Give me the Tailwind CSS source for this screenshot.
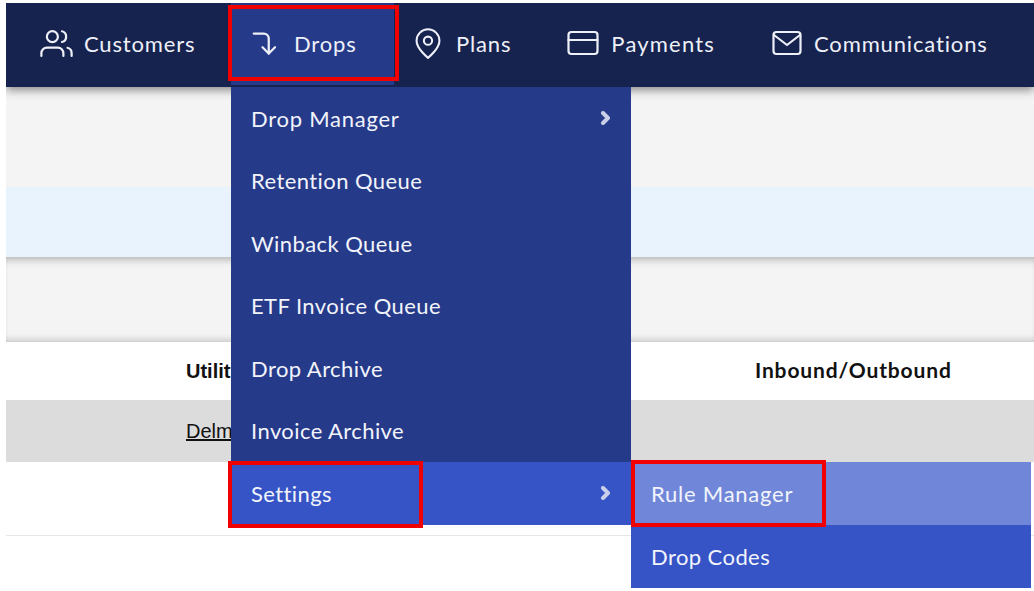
<!DOCTYPE html>
<html lang="en">
<head>
  <meta charset="UTF-8" />
  <title>Drops menu</title>
  <script src="https://cdn.jsdelivr.net/npm/@tailwindcss/browser@4"></script>
</head>
<body class="relative h-[591px] w-[1034px] overflow-hidden bg-white [font-family:Lato,sans-serif]">
  <div class="ml-[6px] mt-[3px] overflow-hidden">
    <!-- top nav -->
    <nav class="relative z-10 flex h-[84px] items-center bg-[#16234f] pb-[4px] text-[22px] tracking-[0.85px] text-[#eef0f8] shadow-[0_3px_9px_rgba(0,0,0,0.45)]">
      <a class="flex h-[84px] w-[225px] items-center pl-[34px]">
        <svg class="mr-[11px] h-[33px] w-[33px]" viewBox="0 0 24 24" fill="none" stroke="currentColor" stroke-width="1.6" stroke-linecap="round" stroke-linejoin="round"><path d="M17 21v-2a4 4 0 0 0-4-4H5a4 4 0 0 0-4 4v2"/><circle cx="9" cy="7" r="4"/><path d="M23 21v-2a4 4 0 0 0-3-3.87"/><path d="M16 3.13a4 4 0 0 1 0 7.75"/></svg>
        <span>Customers</span>
      </a>
      <a class="flex h-[84px] w-[163px] items-center bg-[#263a8a] pl-[19px]">
        <svg class="mr-[14px] h-[33px] w-[30px]" viewBox="0 0 24 24" fill="none" stroke="currentColor" stroke-width="1.8" stroke-linecap="round" stroke-linejoin="round"><path d="M10 15l5 5 5-5"/><path d="M3 4h8a4 4 0 0 1 4 4v12"/></svg>
        <span>Drops</span>
      </a>
      <a class="flex h-[84px] items-center pl-[20px]">
        <svg class="mr-[14px] h-[32px] w-[28px]" viewBox="0 0 24 28" fill="none" stroke="currentColor" stroke-width="1.8" stroke-linecap="round" stroke-linejoin="round"><path d="M22 12c0 7-10 15-10 15S2 19 2 12a10 10 0 0 1 20 0z"/><circle cx="12" cy="12" r="3.6"/></svg>
        <span>Plans</span>
      </a>
      <a class="ml-[56px] flex h-[84px] items-center">
        <svg class="mr-[12px] h-[26px] w-[32px]" viewBox="0 0 32 26" fill="none" stroke="currentColor" stroke-width="2.2" stroke-linecap="round" stroke-linejoin="round"><rect x="1.5" y="2" width="29" height="22" rx="3"/><path d="M1.5 10h29"/></svg>
        <span class="tracking-[1.2px]">Payments</span>
      </a>
      <a class="ml-[57px] flex h-[84px] items-center">
        <svg class="mr-[12px] h-[26px] w-[30px]" viewBox="0 0 30 26" fill="none" stroke="currentColor" stroke-width="2.2" stroke-linecap="round" stroke-linejoin="round"><rect x="1.5" y="2" width="27" height="22" rx="3"/><path d="M2 5l13 10L28 5"/></svg>
        <span>Communications</span>
      </a>
    </nav>

    <!-- page bands -->
    <div class="h-[100px] bg-[#f4f4f4]"></div>
    <div class="h-[70px] bg-[#e8f3fe]"></div>
    <div class="h-[85px] bg-[#f4f4f4] shadow-[inset_0_8px_8px_-6px_rgba(0,0,0,0.3),inset_0_-7px_7px_-5px_rgba(0,0,0,0.2)]"></div>

    <!-- table -->
    <div class="grid h-[58px] grid-cols-[180px_569px_1fr] items-center bg-white text-[20px] font-bold text-[#111]">
      <div class="col-start-2 [font-family:'Liberation_Sans',sans-serif]">Utility</div>
      <div class="col-start-3 pb-[2px] text-[21px] tracking-[0.85px]">Inbound/Outbound</div>
    </div>
    <div class="grid h-[62px] grid-cols-[180px_1fr] items-center bg-[#dcdcdc] text-[20px] text-[#111] [font-family:'Liberation_Sans',sans-serif]">
      <a class="col-start-2 underline">Delmarva</a>
    </div>
    <div class="h-[74px] border-b border-[#e4e6ea] bg-white"></div>
  </div>

  <!-- dropdown -->
  <ul class="absolute left-[231px] top-[87px] z-20 w-[400px] text-[22px] tracking-[0.42px] text-[#f2f4fb]">
    <li class="flex h-[62.5px] items-center justify-between bg-[#263a8a] pl-[20px] pr-[18px]">
      <span class="tracking-[0.75px]">Drop Manager</span>
      <svg class="h-[14px] w-[14px] text-[#c9cfe8]" viewBox="0 0 14 14" fill="none" stroke="currentColor" stroke-width="4" stroke-linecap="round" stroke-linejoin="round"><path d="M4 2l5 5-5 5"/></svg>
    </li>
    <li class="flex h-[62.5px] items-center bg-[#263a8a] pl-[20px]">Retention Queue</li>
    <li class="flex h-[62.5px] items-center bg-[#263a8a] pl-[20px]">Winback Queue</li>
    <li class="flex h-[62.5px] items-center bg-[#263a8a] pl-[20px]">ETF Invoice Queue</li>
    <li class="flex h-[62.5px] items-center bg-[#263a8a] pl-[20px]">Drop Archive</li>
    <li class="flex h-[62.5px] items-center bg-[#263a8a] pl-[20px]">Invoice Archive</li>
    <li class="relative flex h-[62.5px] items-center justify-between bg-[#3654c6] pl-[20px] pr-[18px]">
      <span>Settings</span>
      <svg class="h-[14px] w-[14px] text-[#c9cfe8]" viewBox="0 0 14 14" fill="none" stroke="currentColor" stroke-width="4" stroke-linecap="round" stroke-linejoin="round"><path d="M4 2l5 5-5 5"/></svg>
      <ul class="absolute left-[400px] top-0 w-[400px]">
        <li class="flex h-[63px] items-center bg-[#7086d8] pl-[20px] tracking-[0.75px]">Rule Manager</li>
        <li class="flex h-[63px] items-center bg-[#3654c6] pl-[20px]">Drop Codes</li>
      </ul>
    </li>
  </ul>

  <!-- red annotation boxes -->
  <div class="absolute left-[228px] top-[5px] z-30 h-[76px] w-[171px] border-4 border-[#f00000]"></div>
  <div class="absolute left-[228px] top-[461px] z-30 h-[67px] w-[195px] border-4 border-[#f00000]"></div>
  <div class="absolute left-[631px] top-[460px] z-30 h-[67px] w-[195px] border-4 border-[#f00000]"></div>
</body>
</html>
